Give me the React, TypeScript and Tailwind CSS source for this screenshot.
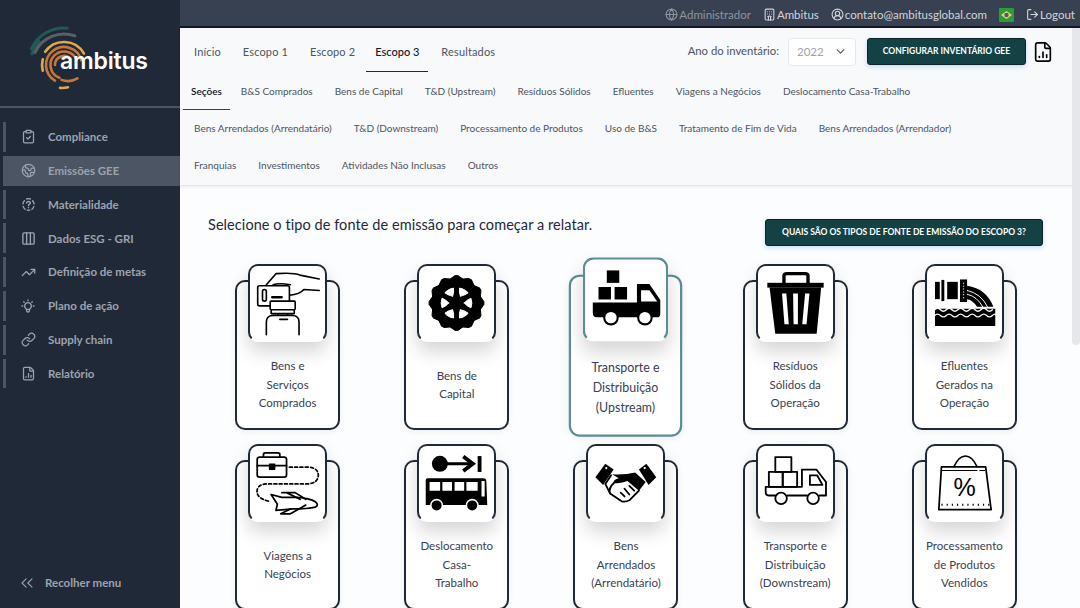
import {
  ClipboardCheck,
  Earth,
  Columns3,
  TrendingUp,
  Link,
  FileChartColumn,
  ChevronsLeft,
  ChevronDown,
  Globe,
  CircleUserRound,
  LogOut,
  Hotel,
} from "lucide-react";
import { TbBulb } from "react-icons/tb";
import type { ReactNode } from "react";

function arc(cx: number, cy: number, r: number, a0: number, a1: number) {
  const rad = (a: number) => (a * Math.PI) / 180;
  const x0 = cx + r * Math.cos(rad(a0));
  const y0 = cy + r * Math.sin(rad(a0));
  const x1 = cx + r * Math.cos(rad(a1));
  const y1 = cy + r * Math.sin(rad(a1));
  const large = Math.abs(a1 - a0) > 180 ? 1 : 0;
  return `M${x0} ${y0}A${r} ${r} 0 ${large} 1 ${x1} ${y1}`;
}

function Logo() {
  return (
    <div className="relative h-[108px] shrink-0 border-b-2 border-[#4b5563]">
      <svg width="120" height="107" viewBox="0 0 120 107" className="absolute left-0 top-0">
        <g fill="none" strokeLinecap="round" strokeWidth="2.600">
          <path d={arc(64, 64, 36, 205, 275)} stroke="#1f5a58" strokeWidth="3" />
          <path d={arc(62, 62, 31, 195, 222)} stroke="#1f5a58" strokeWidth="3" />
          <path d={arc(64, 66, 32, 205, 290)} stroke="#5a5f63" strokeWidth="3" />
          <path d={arc(64, 65, 23, 215, 330)} stroke="#e0aa4a" />
          <path d={arc(64, 65, 22, 165, 195)} stroke="#e0aa4a" />
          <path d={arc(62, 65, 23, 75, 95)} stroke="#e0aa4a" />
          <path d={arc(64, 65, 18, 120, 345)} stroke="#c8763a" />
          <path d={arc(64, 65, 13.500, 110, 340)} stroke="#c8763a" />
          <path d={arc(64, 65, 9, 180, 320)} stroke="#c8763a" />
          <path d={arc(68, 62, 19, 60, 110)} stroke="#c8763a" />
        </g>
      </svg>
      <span className="absolute left-[60px] top-[46px] font-['Inter',sans-serif] text-[23px] font-semibold leading-[30px] tracking-[-0.2px] text-white">
        ambitus
      </span>
    </div>
  );
}

function MaterialityIcon() {
  return (
    <svg width="15" height="15" viewBox="0 0 24 24" fill="none" stroke="currentColor" strokeWidth="2.200" strokeLinecap="round">
      <path d="M9 3.200a9 9 0 0 1 6 0M18.500 6a9 9 0 0 1 2.400 5M20.500 15a9 9 0 0 1-3 4.600M14 21a9 9 0 0 1-4 0M6.500 19.600a9 9 0 0 1-3-4.600M3.100 11a9 9 0 0 1 2.400-5" />
      <path d="M9 9.500c0-3 6-3 6 0 0 2-3 2-3 4M12 16.800v.2" />
    </svg>
  );
}

const menu: { label: string; icon: ReactNode; active?: boolean }[] = [
  { label: "Compliance", icon: <ClipboardCheck size={15} strokeWidth={2} /> },
  { label: "Emissões GEE", icon: <Earth size={15} strokeWidth={2} />, active: true },
  { label: "Materialidade", icon: <MaterialityIcon /> },
  { label: "Dados ESG - GRI", icon: <Columns3 size={15} strokeWidth={2.200} /> },
  { label: "Definição de metas", icon: <TrendingUp size={15} strokeWidth={2} /> },
  { label: "Plano de ação", icon: <TbBulb size={16} /> },
  { label: "Supply chain", icon: <Link size={15} strokeWidth={2} /> },
  { label: "Relatório", icon: <FileChartColumn size={15} strokeWidth={2} /> },
];

function Sidebar() {
  return (
    <aside className="flex h-full w-[180px] shrink-0 flex-col bg-[#1f2937] text-[#9ca3af]">
      <Logo />
      <nav className="flex flex-col gap-[4px] pt-[14px]">
        {menu.map((item) => (
          <div
            key={item.label}
            className={`ml-[3px] flex h-[29.800px] items-center border-l-[3px] border-[#4b5563] ${item.active ? "bg-[#4b5563]" : ""}`}
          >
            <span className="flex w-[42px] justify-center pl-[2px]">{item.icon}</span>
            <span className="text-[11.500px] font-bold">{item.label}</span>
          </div>
        ))}
      </nav>
      <div className="mt-auto flex items-center pb-[15px] pl-[17px]">
        <ChevronsLeft size={20} strokeWidth={1.300} />
        <span className="ml-[8px] text-[11.500px] font-bold">Recolher menu</span>
      </div>
    </aside>
  );
}

function TopBar() {
  return (
    <header className="flex h-[28px] shrink-0 items-center justify-end gap-[12px] border-b-2 border-[#111827] bg-[#374151] pr-[5px] pt-[3px] text-[11.500px] leading-none text-[#d1d5db]">
      <span className="flex items-center gap-[1px] text-[#8b95a1]">
        <Globe size={13} />
        Administrador
      </span>
      <span className="flex items-center gap-[1px]">
        <Hotel size={13} />
        Ambitus
      </span>
      <span className="flex items-center gap-[1px]">
        <CircleUserRound size={13} />
        contato@ambitusglobal.com
      </span>
      <svg width="15" height="14" viewBox="0 0 15 14">
        <rect width="15" height="14" rx="1" fill="#2e9a3a" />
        <path d="M7.500 3L13 7l-5.500 4L2 7z" fill="#f2d15c" />
        <circle cx="7.500" cy="7" r="2.200" fill="#3f5a8c" />
      </svg>
      <span className="flex items-center gap-[1px]">
        <LogOut size={13} />
        Logout
      </span>
    </header>
  );
}

const mainTabs = ["Início", "Escopo 1", "Escopo 2", "Escopo 3", "Resultados"];
const subTabs = [
  "Seções",
  "B&S Comprados",
  "Bens de Capital",
  "T&D (Upstream)",
  "Resíduos Sólidos",
  "Efluentes",
  "Viagens a Negócios",
  "Deslocamento Casa-Trabalho",
  "Bens Arrendados (Arrendatário)",
  "T&D (Downstream)",
  "Processamento de Produtos",
  "Uso de B&S",
  "Tratamento de Fim de Vida",
  "Bens Arrendados (Arrendador)",
  "Franquias",
  "Investimentos",
  "Atividades Não Inclusas",
  "Outros",
];

function Tabs() {
  return (
    <section className="h-[158px] shrink-0 border-b border-[#e5e7eb] bg-[#f8f9fa] shadow-[0_1px_3px_rgba(0,0,0,0.08)]">
      <div className="flex h-[44px] items-center justify-between pl-[5px] pr-[26px]">
        <div className="flex gap-[4px]">
          {mainTabs.map((t) => (
            <span
              key={t}
              className={`flex h-[44px] items-center border-b px-[9px] pt-[5px] text-[11px] ${t === "Escopo 3" ? "-ml-[2px] border-[#1f2937] font-medium text-[#111827]" : "border-transparent tracking-[0.15px] text-[#4b5563]"}`}
            >
              {t}
            </span>
          ))}
        </div>
        <div className="flex items-center pt-[3px]">
          <span className="mr-[9px] text-[11.300px] text-[#4b5563]">Ano do inventário:</span>
          <div className="flex h-[28px] w-[68px] items-center justify-between rounded border border-[#e5e7eb] bg-white px-[8px] text-[11.500px] text-[#9ca3af]">
            2022
            <ChevronDown size={13} className="text-[#4b5563]" />
          </div>
          <button className="ml-[11px] flex h-[27px] w-[159px] items-center justify-center rounded-[3px] border border-[#0b2526] bg-[#144244] text-[8.500px] font-bold text-white shadow-[0_2px_4px_rgba(59,130,246,0.25)]">
            CONFIGURAR INVENTÁRIO GEE
          </button>
          <FileChartColumn size={22} strokeWidth={1.800} className="ml-[6px] text-black" />
        </div>
      </div>
      <div className="flex w-[825px] flex-wrap pl-[3px] pt-[1px]">
        {subTabs.map((t) => (
          <span
            key={t}
            className={`flex h-[37px] items-center text-[10px] ${t === "Seções" ? "border-b border-[#374151] px-[8px] font-semibold text-[#111827]" : "px-[11px] text-[#4b5563]"}`}
          >
            {t}
          </span>
        ))}
      </div>
    </section>
  );
}

function IconFrame({ children }: { children: ReactNode }) {
  return (
    <svg width="78" height="78" viewBox="0 0 78 78" fill="none" stroke="#000" strokeLinecap="round" strokeLinejoin="round">
      {children}
    </svg>
  );
}

function HandIcon() {
  return (
    <IconFrame>
      <g strokeWidth="1.700">
        <path d="M17 20L27 8.500Q45 7 52 10L72 14M72 26L56 25Q52 30 41 31M24 20Q30 18 42 20M20 22L33 22" />
        <rect x="8" y="21" width="33" height="21" rx="2" fill="#fff" />
        <rect x="13" y="25" width="4" height="12" rx="2" />
        <path d="M23 33H33" strokeWidth="2.400" />
        <rect x="21" y="37" width="26" height="9" rx="1" fill="#fff" />
        <path d="M22 46V50H46V46M29 50V52M39 50V52M17 72V59Q17 52 24 52H44Q51 52 51 59V72M31 56H39" />
      </g>
    </IconFrame>
  );
}

function WheelIcon() {
  const holes = [0, 60, 120, 180, 240, 300];
  const teeth = [0, 30, 60, 90, 120, 150, 180, 210, 240, 270, 300, 330];
  return (
    <IconFrame>
      <g transform="translate(39 39)">
        <circle r="26" fill="#000" stroke="none" />
        {teeth.map((a) => (
          <path key={a} d="M-6.500-25L-1.500-28.500H1.500L6.500-25Z" fill="#000" stroke="#000" strokeWidth="1" transform={`rotate(${a})`} />
        ))}
        {holes.map((a) => (
          <path key={a} d="M8 0Q11 -3.500 15 -5Q17 0 15 5Q11 3.500 8 0Z" fill="#fff" stroke="#fff" strokeWidth="1" transform={`rotate(${a})`} />
        ))}
      </g>
    </IconFrame>
  );
}

function TruckSolidIcon() {
  return (
    <IconFrame>
      <g stroke="none">
        <rect x="21" y="11" width="12" height="12" fill="#000" />
        <rect x="13" y="27" width="12" height="12" fill="#000" />
        <rect x="28.500" y="27" width="12" height="12" fill="#000" />
        <path d="M7.500 42H50V24H62L72.500 39.500V53Q72.500 56 70 56H11Q7.500 56 7.500 52Z" fill="#000" />
        <path d="M54 30H62L69.500 41H54Z" fill="#fff" />
        <circle cx="25" cy="56.500" r="7.500" fill="#000" />
        <circle cx="25" cy="56.500" r="5.500" fill="#fff" />
        <circle cx="57.700" cy="56.500" r="7.500" fill="#000" />
        <circle cx="57.700" cy="56.500" r="5.500" fill="#fff" />
      </g>
    </IconFrame>
  );
}

function TrashIcon() {
  return (
    <IconFrame>
      <path d="M27 18V11Q27 8.500 30 8.500H49Q52 8.500 52 11V18" strokeWidth="3.500" />
      <g stroke="none">
        <rect x="9.700" y="18" width="58.600" height="5" fill="#000" />
        <path d="M12 23H65.700L61 71H18Z" fill="#000" />
        <path d="M25 29H29.500L32 61H27.500ZM36.500 29H41.500L41.500 61H37ZM49 29H53.500L50.500 61H46Z" fill="#fff" />
      </g>
    </IconFrame>
  );
}

function PipeIcon() {
  return (
    <IconFrame>
      <g stroke="none" fill="#000">
        <rect x="8.300" y="17" width="5" height="18" />
        <rect x="15" y="15" width="3" height="22" />
        <rect x="21" y="17" width="11" height="18" />
        <rect x="34.300" y="14.500" width="7.400" height="23.500" />
        <path d="M41.700 21Q62 24 69 43H52Q48 36 41.700 35Z" />
        <path d="M8.300 45H71V63H8.300Z" />
      </g>
      <path d="M38 18V36" stroke="#fff" strokeWidth="1.300" strokeDasharray="1 2" strokeLinecap="butt" />
      <path d="M42 26Q56 29 63 43M42 30Q52 32 58 43" stroke="#fff" strokeWidth="1" />
      <path d="M8 52Q11 49 14 52T20 52T26 52T32 52T38 52T44 52T50 52T56 52T62 52T68 52T72 52" stroke="#fff" strokeWidth="1.300" />
      <path d="M8 46Q11 43 14 46T20 46T26 46T32 46T38 46T44 46T50 46T56 46T62 46T68 46" stroke="#fff" strokeWidth="1.500" />
    </IconFrame>
  );
}

function TravelIcon() {
  return (
    <IconFrame>
      <g strokeWidth="1.800">
        <rect x="7.500" y="12" width="30.500" height="21" rx="2.500" />
        <path d="M14 12V9Q14 7.700 16 7.700H29Q31 7.700 31 9V12M7.500 21H38" />
        <rect x="20.500" y="19.500" width="5" height="5" fill="#000" />
        <path d="M41 22.500H60Q71 23 71 31T60 40H16Q7.300 41 7.300 48T20 58" strokeDasharray="3 2.500" />
        <path d="M22 51L33 54H49Q62 55 68 58.500Q72 62 68 64Q60 66 45 66L27 67.500L28.500 61Z" fill="#fff" />
        <path d="M33 49H47L58 56M38 49L52 56M42 66L32 71H42L58 62" />
      </g>
    </IconFrame>
  );
}

function BusIcon() {
  return (
    <IconFrame>
      <circle cx="21.700" cy="19" r="8.300" fill="#000" stroke="none" />
      <path d="M26 19H54" strokeWidth="3" />
      <path d="M46 11.500L56 19L46 26.500" strokeWidth="4" strokeLinecap="butt" strokeLinejoin="miter" />
      <g stroke="none">
        <rect x="61" y="11" width="4" height="16.500" fill="#000" />
        <path d="M9 34H67Q70 34 70 37L71 62H7V36Q7 34 9 34Z" fill="#000" />
        <path d="M11 38H22V47H11ZM24.300 38H34.300V47H24.300ZM37 38H47V47H37ZM49.300 38H61V47H49.300ZM65 37H68.300V53H65Z" fill="#fff" />
        <circle cx="18.300" cy="62.300" r="6.800" fill="#fff" />
        <circle cx="18.300" cy="62.300" r="5.200" fill="#000" />
        <circle cx="55.300" cy="62.300" r="6.800" fill="#fff" />
        <circle cx="55.300" cy="62.300" r="5.200" fill="#000" />
      </g>
    </IconFrame>
  );
}

function HandshakeIcon() {
  return (
    <IconFrame>
      <g stroke="none" fill="#000">
        <path d="M7.700 33L18 19L26.700 25L15.700 41Z" />
        <path d="M53 25L60.700 19L71 33L63 41Z" />
        <path d="M25 30Q38 31 49 28L60 38L53 47L41 37Q34 40 27 39Q25 36 32 34Z" />
      </g>
      <path d="M18 40L23 50L35 58Q39 59 43 57L53 47M24 31L18 40M23 50Q21 44 27 39M34 49L38 53M38 45L43 51M43 42L48 47" strokeWidth="1.900" />
      <circle cx="19" cy="23.500" r="1.200" fill="#fff" stroke="none" />
      <circle cx="59" cy="23.500" r="1.200" fill="#fff" stroke="none" />
    </IconFrame>
  );
}

function TruckOutlineIcon() {
  return (
    <IconFrame>
      <g strokeWidth="1.900">
        <rect x="18" y="12" width="16.700" height="15.500" />
        <rect x="11.300" y="27.500" width="14.400" height="15.500" />
        <rect x="25.700" y="27.500" width="15" height="15.500" />
        <path d="M18 52H11Q8 52 8 49V43H45.700V25H60.700L70.700 38V52H64M51 52H30.500" />
        <path d="M54 31H61.500L67 41H54Z" />
        <circle cx="24" cy="55" r="6" />
        <circle cx="57.300" cy="55" r="6" />
      </g>
    </IconFrame>
  );
}

function BagIcon() {
  return (
    <IconFrame>
      <g strokeWidth="1.400">
        <path d="M28 22Q33 11 40 11T52 22" strokeWidth="1.600" />
        <path d="M15 22.300H61L66.700 66.700H12.300Z" strokeWidth="1.800" />
        <path d="M16 26H52M55 26H60" strokeWidth="1.200" />
        <path d="M15 61.700H65" strokeWidth="2" strokeDasharray="1.200 4.200" strokeLinecap="butt" />
      </g>
      <text x="39" y="53" textAnchor="middle" fontSize="26" fill="#000" stroke="none" fontFamily="Liberation Sans, sans-serif">
        %
      </text>
    </IconFrame>
  );
}

const sources: { lines: string[]; icon: ReactNode; active?: boolean }[] = [
  { lines: ["Bens e", "Serviços", "Comprados"], icon: <HandIcon /> },
  { lines: ["Bens de", "Capital"], icon: <WheelIcon /> },
  { lines: ["Transporte e", "Distribuição", "(Upstream)"], icon: <TruckSolidIcon />, active: true },
  { lines: ["Resíduos", "Sólidos da", "Operação"], icon: <TrashIcon /> },
  { lines: ["Efluentes", "Gerados na", "Operação"], icon: <PipeIcon /> },
  { lines: ["Viagens a", "Negócios"], icon: <TravelIcon /> },
  { lines: ["Deslocamento", "Casa-", "Trabalho"], icon: <BusIcon /> },
  { lines: ["Bens", "Arrendados", "(Arrendatário)"], icon: <HandshakeIcon /> },
  { lines: ["Transporte e", "Distribuição", "(Downstream)"], icon: <TruckOutlineIcon /> },
  { lines: ["Processamento", "de Produtos", "Vendidos"], icon: <BagIcon /> },
];

function SourceCard({ lines, icon, active }: { lines: string[]; icon: ReactNode; active?: boolean }) {
  const border = active ? "border-[#5a8d94]" : "border-[#1f2937]";
  return (
    <div className={`w-[105px] pt-[16px] ${active ? "relative z-10 scale-[1.08]" : ""}`}>
      <div className={`flex h-[150px] flex-col items-center rounded-[10px] border-2 bg-white shadow-[0_2px_6px_rgba(0,0,0,0.06)] ${border}`}>
        <div
          className={`-mt-[18px] flex h-[78px] w-[79px] shrink-0 items-center justify-center rounded-[10px] border-2 border-b-transparent bg-white shadow-[0_10px_18px_rgba(0,0,0,0.16)] ${border}`}
        >
          {icon}
        </div>
        <div className="flex flex-1 flex-col items-center justify-center text-[11.500px] leading-[18.400px] text-[#374151]">
          {lines.map((l) => (
            <span key={l}>{l}</span>
          ))}
        </div>
      </div>
    </div>
  );
}

export default function App() {
  return (
    <div className="flex h-[608px] w-[1080px] overflow-hidden bg-[#fbfdfe] font-['Lato','Noto_Sans',sans-serif]">
      <Sidebar />
      <main className="relative flex min-w-0 flex-1 flex-col">
        <TopBar />
        <Tabs />
        <div className="flex items-start justify-between pl-[28px] pr-[37px] pt-[33px]">
          <h2 className="-mt-[4px] text-[14.500px] font-normal leading-[20px] tracking-[0.07px] text-[#1f2937]">
            Selecione o tipo de fonte de emissão para começar a relatar.
          </h2>
          <button className="flex h-[27px] w-[278px] items-center justify-center rounded-[3px] border border-[#0b2526] bg-[#144244] text-[8.500px] font-bold text-white shadow-[0_2px_4px_rgba(59,130,246,0.25)]">
            QUAIS SÃO OS TIPOS DE FONTE DE EMISSÃO DO ESCOPO 3?
          </button>
        </div>
        <div className="ml-[23px] mt-[18px] grid w-[846px] grid-cols-5 justify-items-center gap-y-[14px]">
          {sources.map((s) => (
            <SourceCard key={s.lines.join(" ")} {...s} />
          ))}
        </div>
        <div className="absolute right-0 top-[28px] h-[317px] w-[8px] rounded-b-[4px] bg-[#e5e7eb]" />
      </main>
    </div>
  );
}
